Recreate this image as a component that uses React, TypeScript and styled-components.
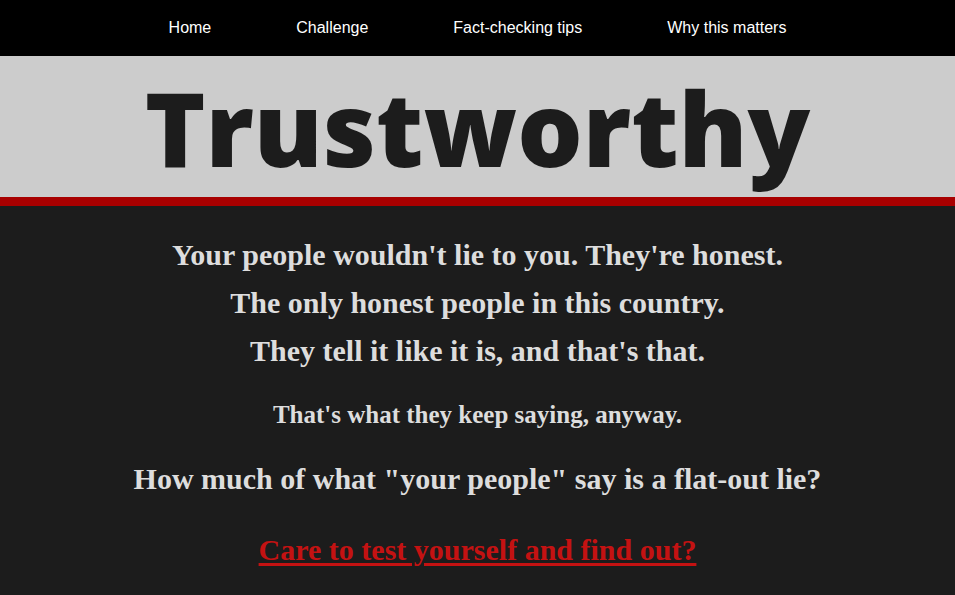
import styled, { createGlobalStyle } from 'styled-components';

const GlobalStyle = createGlobalStyle`
    html, body {
        margin: 0;
        padding: 0;
        background-color: #1c1c1c;
    }
    #root {
        min-height: 100vh;
        display: flex;
        flex-direction: column;
    }
`;

const Nav = styled.nav`
    background-color: #000000;
    height: 56px;
    display: flex;
    justify-content: center;
    align-items: center;
    gap: 85px;
    font-family: 'Liberation Sans', Arial, sans-serif;
    font-size: 16px;

    a {
        color: #ffffff;
        text-decoration: none;
        line-height: 56px;
    }
`;

const Masthead = styled.header`
    background-color: #cccccc;
    border-bottom: 9px solid #a80000;
    height: 141px;
    box-sizing: content-box;
    text-align: center;

    h1 {
        margin: 0;
        padding-top: 2px;
        font-family: 'Open Sans', 'Liberation Sans', sans-serif;
        font-weight: 800;
        font-size: 103px;
        line-height: 139px;
        color: #1c1c1c;
    }
`;

const Main = styled.main`
    flex: 1;
    background-color: #1c1c1c;
    color: #dddddd;
    font-family: 'Liberation Serif', 'Times New Roman', serif;
    font-weight: 700;
    text-align: center;
    padding-top: 25px;
    padding-bottom: 20px;
`;

const Line = styled.p<{ $size?: number; $gap?: number; $height?: number }>`
    margin: ${(p) => p.$gap ?? 0}px 0 0;
    font-size: ${(p) => p.$size ?? 30}px;
    line-height: ${(p) => p.$height ?? 48}px;
`;

const TestLink = styled.a`
    color: #c41212;
    text-decoration: underline;
    text-decoration-thickness: 3px;
    text-underline-offset: 3px;
`;

const links = ['Home', 'Challenge', 'Fact-checking tips', 'Why this matters'];

const App = () => {
    return (
        <>
            <GlobalStyle />
            <Nav>
                {links.map((label) => (
                    <a key={label} href="#">
                        {label}
                    </a>
                ))}
            </Nav>
            <Masthead>
                <h1>Trustworthy</h1>
            </Masthead>
            <Main>
                <Line>Your people wouldn't lie to you. They're honest.</Line>
                <Line>The only honest people in this country.</Line>
                <Line>They tell it like it is, and that's that.</Line>
                <Line $size={25} $height={40} $gap={20}>
                    That's what they keep saying, anyway.
                </Line>
                <Line $gap={20}>How much of what "your people" say is a flat-out lie?</Line>
                <Line $gap={23}>
                    <TestLink href="#">Care to test yourself and find out?</TestLink>
                </Line>
            </Main>
        </>
    );
};

export default App;
